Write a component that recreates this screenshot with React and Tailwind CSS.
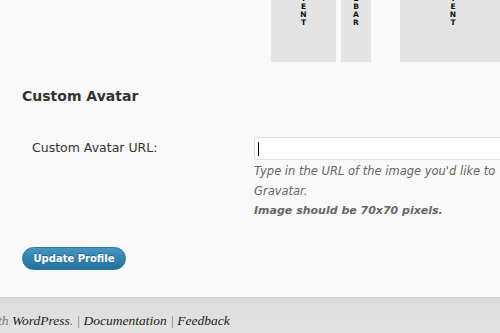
import React from "react";

function Letters({ word }) {
  return (
    <div className="flex flex-col items-center -mt-[29px]">
      {word.split("").map((c, i) => (
        <div
          key={i}
          className="h-[8px] leading-[8px] text-[7.5px] font-black text-[#111] font-['DejaVu_Sans',sans-serif]"
        >
          {c}
        </div>
      ))}
    </div>
  );
}

export default function App() {
  return (
    <div className="w-[500px] h-[333px] bg-[#f9f9f9] overflow-hidden flex flex-col font-['DejaVu_Sans',sans-serif]">
      <div className="flex h-[62px] shrink-0 overflow-hidden">
        <div className="w-[271px] shrink-0" />
        <div className="w-[65px] shrink-0 bg-[#e4e4e4] overflow-hidden flex justify-center">
          <Letters word="CONTENT" />
        </div>
        <div className="w-[5px] shrink-0" />
        <div className="w-[30px] shrink-0 bg-[#e4e4e4] overflow-hidden flex justify-center">
          <Letters word="SIDEBAR" />
        </div>
        <div className="w-[29px] shrink-0" />
        <div className="w-[106px] shrink-0 bg-[#e4e4e4] overflow-hidden flex justify-center">
          <Letters word="CONTENT" />
        </div>
      </div>

      <h3 className="mt-[24px] ml-[22px] text-[14px] leading-[20px] font-bold text-[#333]">
        Custom Avatar
      </h3>

      <div className="flex mt-[31px]">
        <div className="w-[254px] shrink-0 pl-[32px] h-[23px] flex items-center text-[12.5px] text-[#333]">
          Custom Avatar URL:
        </div>
        <div className="flex flex-col w-[300px] shrink-0">
          <div className="h-[23px] bg-white border border-[#dfdfdf] rounded-[3px] flex items-center pl-[3px]">
            <div className="w-[1px] h-[14px] bg-black" />
          </div>
          <div className="mt-[2px] text-[11.5px] leading-[19.5px] italic text-[#666] whitespace-nowrap">
            <div>Type in the URL of the image you'd like to</div>
            <div>Gravatar.</div>
            <div className="font-bold text-[11px]">Image should be 70x70 pixels.</div>
          </div>
        </div>
      </div>

      <div className="mt-[26px] ml-[22px]">
        <button className="w-[104px] h-[23px] rounded-full bg-linear-to-b from-[#4595c2] to-[#21709a] border border-[#2a78a3] text-white text-[10px] font-bold flex items-center justify-center [text-shadow:0_-1px_0_rgba(0,0,0,0.3)]">
          Update Profile
        </button>
      </div>

      <div className="mt-auto h-[36px] shrink-0 border-t border-[#cdcdcd] bg-linear-to-b from-[#dcdcdc] to-[#e3e3e3] flex items-center pt-[11px] overflow-hidden">
        <div className="ml-[-2px] whitespace-nowrap italic text-[13.5px] font-['Liberation_Serif',serif] text-[#777]">
          th <span className="text-[#222]">WordPress</span>. | <span className="text-[#222]">Documentation</span> | <span className="text-[#222]">Feedback</span>
        </div>
      </div>
    </div>
  );
}
